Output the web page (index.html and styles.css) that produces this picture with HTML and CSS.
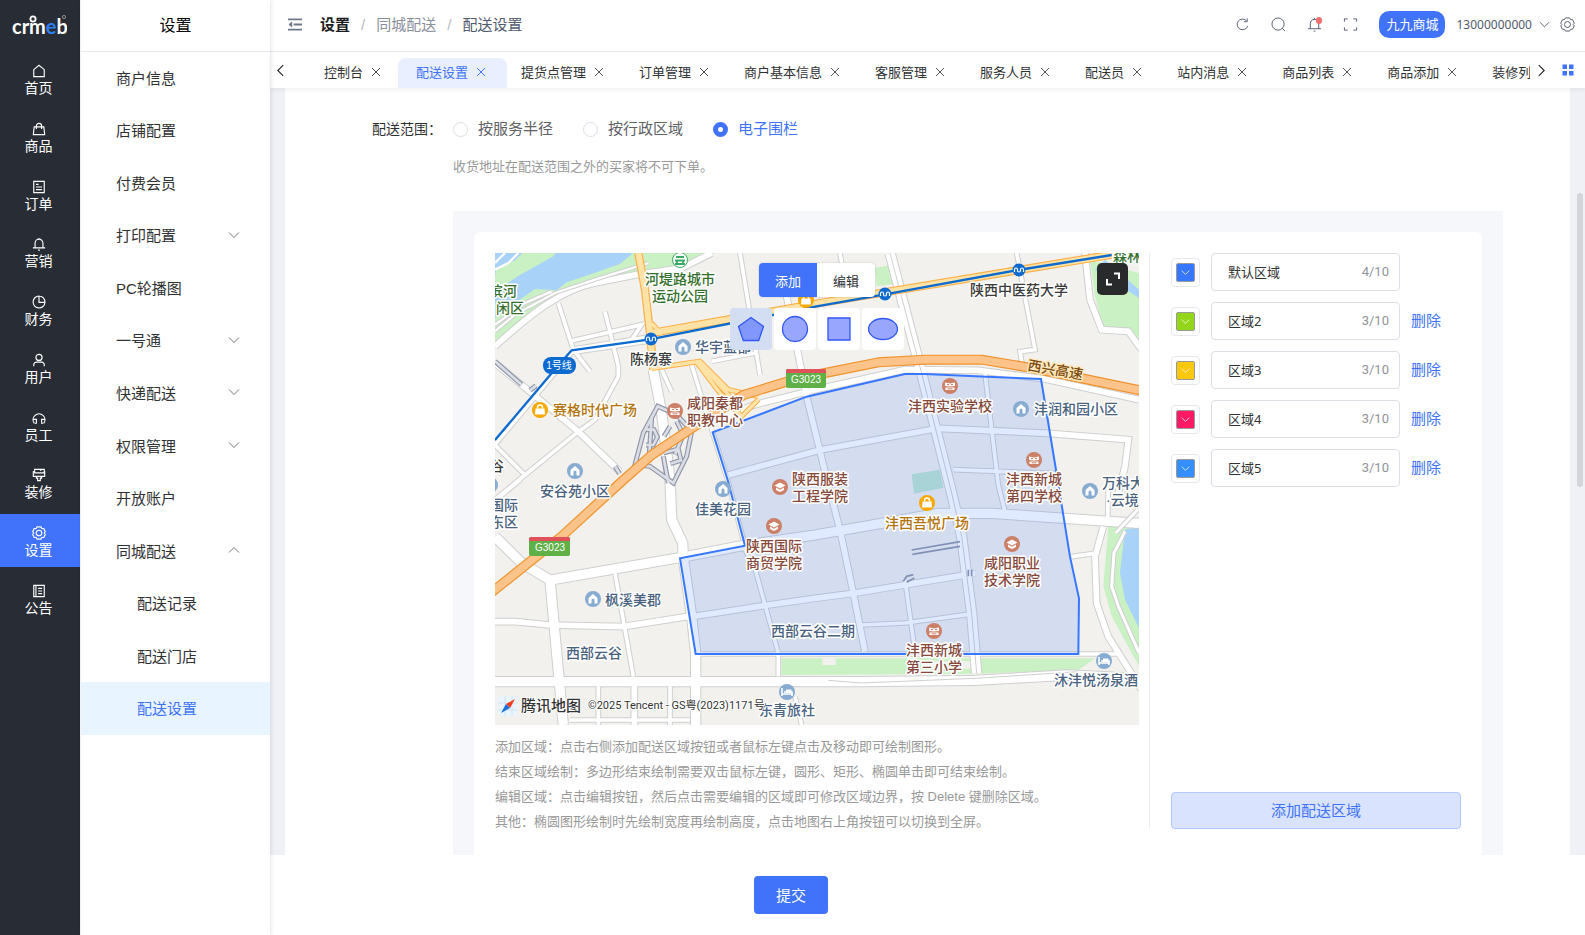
FILE: index.html
```html
<!DOCTYPE html>
<html lang="zh-CN">
<head>
<meta charset="utf-8">
<title>配送设置</title>
<link rel="stylesheet" href="styles.css">
</head>
<body>
<svg class="sprite" aria-hidden="true">
  <symbol id="down" viewBox="0 0 12 12"><path d="M1 3.500l5 5 5-5"/></symbol>
  <symbol id="up" viewBox="0 0 12 12"><path d="M1 8.500l5-5 5 5"/></symbol>
  <symbol id="x" viewBox="0 0 10 10"><path d="M1 1l8 8M9 1L1 9"/></symbol>
  <symbol id="gear" viewBox="0 0 16 16"><path d="M5.800 1h4.400l1 1.800 2.300.2 1.700 3.600-1.200 1.400 1.200 1.400-1.700 3.600-2.300.2-1 1.800H5.800l-1-1.800-2.300-.2L.8 9.400 2 8 .8 6.600 2.500 3l2.300-.2z"/><circle cx="8" cy="8" r="3.200"/></symbol>
  <symbol id="home-poi" viewBox="-8 -8 16 16"><circle r="8" fill="#88abd1"/><path d="M0-5L-4.500-1V4.500H-1.500V1a1.500 1.500 0 0 1 3 0V4.500H4.500V-1z" fill="#fff"/></symbol>
  <symbol id="book-poi" viewBox="-8 -8 16 16"><circle r="8" fill="#cc8068"/><path d="M-5-3.500L0-2.500l5-1V0L0 .5-5 0zM-4.500 1.500h9V4h-9z" fill="#fff"/><path d="M-3-1.500h2m2 0h2M-2.500 2.800h5" stroke="#cc8068" fill="none"/></symbol>
  <symbol id="cap-poi" viewBox="-8 -8 16 16"><circle r="8" fill="#cc8068"/><path d="M0-4.500L-5.500-1.500 0 1.500l5.500-3zM-4 .5V3l4 2 4-2V.5L0 2.800z" fill="#fff"/></symbol>
  <symbol id="bag-poi" viewBox="-8 -8 16 16"><circle r="8" fill="#f9a800"/><path d="M-4.500-1.500h9l.5 6H-5z" fill="#fff"/><path d="M-2.500-1.500v-1a2.500 2.500 0 0 1 5 0v1" fill="none" stroke="#fff" stroke-width="1.500"/></symbol>
  <symbol id="bed-poi" viewBox="-8 -8 16 16"><circle r="8" fill="#88abd1"/><path d="M-5-4v8M-5 2H5V4M-3 0h8v2" fill="none" stroke="#fff" stroke-width="1.600"/><path d="M-1-2.500h5.500V1H-1z" fill="#fff"/></symbol>
  <symbol id="metro" viewBox="-7 -7 14 14"><circle r="6.500" fill="#0d6bd0"/><path d="M-4.500 2v-2.500a1.500 1.500 0 0 1 3 0v1a1.500 1.500 0 0 0 3 0v-1a1.500 1.500 0 0 1 3 0V2" fill="none" stroke="#fff" stroke-width="1.200"/></symbol>
  <defs>
    <path id="roads-s" d="M190 151L235 290 285 355M330 176L370 340V370L300 500 250 536 90 666 0 740M0 576L90 666M75 681L10 735M225 265L440 215 410 260M225 290L460 252M500 350L530 416M590 336L650 530 698 681 745 860M735 0L795 366M1035 0L1045 60M1565 0L1620 290 1575 296 1585 356M1470 361L1510 696 1530 776M1375 650L1690 662M360 961L415 1271M745 880L780 946 850 1201M1100 1116L1230 1110 1420 1084M1230 981L1260 1196M1730 911L1800 901M1840 700L1838 800M310 1300V1416M525 1300V1416M225 1401H585M850 1201V1270M900 1330L920 1416M602 1203H1870M650 325L780 300M0 575L175 365 230 298 465 264"/>
    <path id="roads-m" d="M0 330L105 416 250 536 375 656M875 130L935 431 995 676 1035 831 1075 1021 1110 1196M1770 0L1785 140 1820 230 1900 235 1940 290M660 500L780 455 960 410 1230 350 1450 352 1650 378 1932 440M700 666L975 591 1330 526 1660 541 1900 560 1890 640 1870 720M0 1106H60L165 1116 385 1121 575 1091 605 1089 820 1056 960 1036 1075 1021 1440 961M1825 821L1800 911 1805 1051 1840 1151 1940 1310M418 1290V1416M0 280C110 180 200 110 300 90L425 65 560 45 650 0"/>
    <path id="roads-l" d="M475 350L500 480 525 681 530 800 563 870 565 916 590 1091 602 1201V1416M1185 0L1280 361 1370 720 1400 850 1430 1081 1445 1261M0 851L80 930 165 981 565 912 730 880 960 846 1330 781H1490L1710 796 1932 811M165 981L185 1200 205 1416M0 1286H1100L1440 1282 1720 1266 1932 1276"/>
    <path id="yellow-l" d="M430 0L450 110 465 240 475 350M470 240L975 150 1850 5"/>
    <path id="yellow-s" d="M470 346L615 325 700 410 790 430M605 328L690 440 740 490 790 440M615 330L650 370 740 470M470 210L500 245"/>
    <path id="motorway" d="M-10 1018L200 850 385 681 470 606 575 536 745 426 875 386 960 366 1150 328 1290 320H1460L1610 345 1940 413"/>
    <path id="ramps" d="M488 460L445 540 420 635 465 640 535 690 575 610 590 535 545 485zM470 490L462 620M455 530h22l10 22-12 24h-22M525 520l-18 30M545 505l20 40-25 60M505 600l45-12 8 34-32 10M520 690L505 610M0 325L80 395M105 412l18-14M360 640l14 22"/>
  </defs>
</svg>

<div class="app">
  <nav class="rail" aria-label="主菜单">
    <svg class="logo" viewBox="0 0 56 26" role="img" aria-label="crmeb">
      <text x="1" y="22" class="logo-text">crm<tspan class="logo-e">e</tspan>b</text>
      <circle cx="22" cy="7" r="2.600" fill="none" stroke="#fff" stroke-width="1.800"/>
      <circle cx="53" cy="5" r="1.600" fill="none" stroke="#ccc" stroke-width=".6"/>
    </svg>
    <div class="rail-list">
      <a href="#"><svg viewBox="0 0 16 16"><path d="M2 14.500V6.500L8 1.500l6 5v8z"/></svg>首页</a>
      <a href="#"><svg viewBox="0 0 16 16"><path d="M2.500 5.500h11l1 9h-13zM5 8V4.500a3 3 0 0 1 6 0V8"/></svg>商品</a>
      <a href="#"><svg viewBox="0 0 16 16"><path d="M2 1.500h12v13H2zM4.500 5h3M4.500 8h7M4.500 11h7"/></svg>订单</a>
      <a href="#"><svg viewBox="0 0 16 16"><path d="M3.500 12.500V7a4.500 4.500 0 0 1 9 0v5.500M1 12.500h14M8 1v1.500M7 15h2"/></svg>营销</a>
      <a href="#"><svg viewBox="0 0 16 16"><path d="M8 1.200A6.800 6.800 0 1 0 14.800 8.500H8zM8 1.200A6.800 6.800 0 0 1 14.800 8.500"/></svg>财务</a>
      <a href="#"><svg viewBox="0 0 16 16"><circle cx="8" cy="5" r="3.500"/><path d="M2 15v-1.500a3 3 0 0 1 3-3h6a3 3 0 0 1 3 3V15"/></svg>用户</a>
      <a href="#"><svg viewBox="0 0 16 16"><path d="M2.500 14A6.800 6.800 0 1 1 13.500 14M1.500 9.500h3.500V14H3M14.500 9.500H11V14h2"/></svg>员工</a>
      <a href="#"><svg viewBox="0 0 16 16"><path d="M3 1.500h11v4H3zM1.500 3.500v6h13v-6M5 9.500v2h1.500v3h3v-3H11v-2M10 1.500v2"/></svg>装修</a>
      <a href="#" class="on" aria-current="page"><svg viewBox="0 0 16 16"><use href="#gear"/></svg>设置</a>
      <a href="#"><svg viewBox="0 0 16 16"><path d="M2 1.500h12v13H2zM4.500 1.500v13M7 5h4.500M7 8h4.500M7 11h4.500"/></svg>公告</a>
    </div>
  </nav>

  <aside class="side">
    <h2>设置</h2>
    <div class="side-list">
      <a href="#">商户信息</a>
      <a href="#">店铺配置</a>
      <a href="#">付费会员</a>
      <a href="#">打印配置<svg><use href="#down"/></svg></a>
      <a href="#">PC轮播图</a>
      <a href="#">一号通<svg><use href="#down"/></svg></a>
      <a href="#">快递配送<svg><use href="#down"/></svg></a>
      <a href="#">权限管理<svg><use href="#down"/></svg></a>
      <a href="#">开放账户</a>
      <a href="#">同城配送<svg><use href="#up"/></svg></a>
      <a href="#" class="sub">配送记录</a>
      <a href="#" class="sub">配送门店</a>
      <a href="#" class="sub on" aria-current="page">配送设置</a>
    </div>
  </aside>

  <div class="main">
    <header class="top">
      <button class="icon-btn fold" aria-label="折叠菜单"><svg viewBox="0 0 16 14"><path d="M0 1.500h15M6 7h9M0 12.500h15" stroke-width="2"/><path d="M4 4.500L1 7l3 2.500z" fill="currentColor"/></svg></button>
      <nav class="crumbs" aria-label="面包屑"><b>设置</b><i>/</i><span class="mid">同城配送</span><i>/</i><span>配送设置</span></nav>
      <div class="tools">
        <button class="icon-btn" aria-label="刷新"><svg viewBox="0 0 16 16"><path d="M13.500 9.500A5.700 5.700 0 1 1 12 3.800M13 1.500v3.500H9.500"/></svg></button>
        <button class="icon-btn" aria-label="搜索"><svg viewBox="0 0 16 16"><circle cx="7.500" cy="7.500" r="6.500"/><path d="M12 12l3 3"/></svg></button>
        <button class="icon-btn bell" aria-label="消息"><svg viewBox="0 0 16 16"><path d="M3.500 12.500V7a4.500 4.500 0 0 1 9 0v5.500M1 12.500h14M8 1v1.500M7 15h2"/></svg></button>
        <button class="icon-btn" aria-label="全屏"><svg viewBox="0 0 16 16"><path d="M1.500 5V2H5M11 2h3.500v3M14.500 11v3H11M5 14H1.500v-3"/></svg></button>
      </div>
      <span class="shop">九九商城</span>
      <button class="user">13000000000<svg><use href="#down"/></svg></button>
      <button class="icon-btn" aria-label="系统设置"><svg viewBox="0 0 16 16"><use href="#gear"/></svg></button>
    </header>

    <div class="tabs">
      <button class="icon-btn prev" aria-label="向左"><svg viewBox="0 0 12 12"><path d="M8.500 1L3.500 6l5 5"/></svg></button>
      <div class="tab-list">
        <a href="#">控制台<svg><use href="#x"/></svg></a>
        <a href="#" class="on">配送设置<svg><use href="#x"/></svg></a>
        <a href="#">提货点管理<svg><use href="#x"/></svg></a>
        <a href="#">订单管理<svg><use href="#x"/></svg></a>
        <a href="#">商户基本信息<svg><use href="#x"/></svg></a>
        <a href="#">客服管理<svg><use href="#x"/></svg></a>
        <a href="#">服务人员<svg><use href="#x"/></svg></a>
        <a href="#">配送员<svg><use href="#x"/></svg></a>
        <a href="#">站内消息<svg><use href="#x"/></svg></a>
        <a href="#">商品列表<svg><use href="#x"/></svg></a>
        <a href="#">商品添加<svg><use href="#x"/></svg></a>
        <a href="#">装修列表<svg><use href="#x"/></svg></a>
      </div>
      <button class="icon-btn next" aria-label="向右"><svg viewBox="0 0 12 12"><path d="M3.500 1l5 5-5 5"/></svg></button>
      <button class="icon-btn grid" aria-label="标签页操作"><svg viewBox="0 0 12 12"><path d="M.5.500h4.500v4.500H.5zM7 .5h4.500v4.500H7zM.5 7h4.500v4.500H.5zM7 7h4.500v4.500H7z"/></svg></button>
    </div>

    <main class="content">
      <div class="card">
        <fieldset class="range">
          <legend>配送范围：</legend>
          <div class="options">
            <label><input type="radio" name="range">按服务半径</label>
            <label><input type="radio" name="range">按行政区域</label>
            <label><input type="radio" name="range" checked>电子围栏</label>
          </div>
        </fieldset>
        <p class="hint">收货地址在配送范围之外的买家将不可下单。</p>

        <section class="fence">
          <div class="fence-body">
            <div class="map-col">
              <div class="map">
                <svg class="map-art" viewBox="0 0 644 472" preserveAspectRatio="xMidYMid slice">
                  <g transform="scale(.33333)">
                    <path class="green" d="M0 0H660L550 45 415 60 300 88 185 140 85 200 0 285z"/>
                    <path class="water" d="M0 0H82L60 22 5 45 0 70zM175 10L182 0H415L375 32 305 58 215 88 185 112 120 108 60 150 0 195V115L75 66z"/>
                    <path class="green" d="M1785 20L1932 60V270L1900 225H1825L1800 130zM1140 45L1192 35 1205 92 1145 100z"/>
                    <path class="water" d="M1830 20L1932 110V135L1800 50z"/>
                    <path class="green" d="M1840 821L1932 800V1240L1850 1090 1825 1000zM860 1216H1800L1750 1252 1440 1262 860 1266z"/>
                    <path class="water" d="M1890 830L1932 820V1125L1890 1040 1875 960z"/>
                    <path fill="#f2f1ee" d="M982 1216h40v20h-40zM1280 1225h150v22h-150z"/>
                    <g class="case">
                      <use href="#roads-s" stroke-width="17"/><use href="#roads-m" stroke-width="23"/><use href="#roads-l" stroke-width="34"/>
                    </g>
                    <g class="fill">
                      <use href="#roads-s" stroke-width="11"/><use href="#roads-m" stroke-width="17"/><use href="#roads-l" stroke-width="28"/>
                    </g>
                    <g class="thin">
                      <path d="M0 235L60 185 180 120 300 80 460 30M0 215L90 150 170 115" stroke-width="13"/>
                      <path d="M0 235L60 185 180 120 300 80 460 30M0 215L90 150 170 115M0 50L40 30 70 0M0 30L30 0" stroke-width="7" stroke="#fff"/>
                      <path d="M1185 0L1280 361 1370 720 1400 850 1430 1081 1445 1261M1000 1282L1100 1290 1440 1276 1750 1256"/>
                      <path d="M1890 835L1857 900 1850 1000 1870 1060 1932 1200M1862 840L1928 770" stroke-width="15"/>
                      <path d="M1890 835L1857 900 1850 1000 1870 1060 1932 1200M1862 840L1928 770" stroke-width="9" stroke="#fff"/>
                    </g>
                    <g class="ramp">
                      <use href="#ramps" stroke-width="15"/>
                      <use href="#ramps" stroke-width="8" stroke="#dcdee6"/>
                      <path d="M1250 891L1395 866M1252 904L1395 880M1225 985L1235 970 1255 965M1235 988L1258 975M1420 950V970M1430 950V970"/>
                    </g>
                    <path fill="#bfe6d0" d="M1250 664L1335 650 1345 705 1257 722z"/>
                    <g class="yellow-case"><use href="#yellow-l" stroke-width="25"/><use href="#yellow-s" stroke-width="16"/></g>
                    <g class="yellow-fill"><use href="#yellow-l" stroke-width="18"/><use href="#yellow-s" stroke-width="10"/></g>
                    <use href="#motorway" class="motor-case"/>
                    <use href="#motorway" class="motor-fill"/>
                    <path class="metro-line" d="M0 561L175 355 230 292 465 259 960 161 1170 124 1570 51 1850 6"/>
                    <path class="fence-shape" d="M653 538L698 681 750 878 555 916 602 1203H1750L1752 1036 1725 911 1688 681 1638 378 1475 371 1290 363H1230L935 431z"/>
                  </g>
                  <g>
                    <use href="#metro" x="149" y="79" width="14" height="14"/><use href="#metro" x="383" y="34" width="14" height="14"/><use href="#metro" x="517" y="10" width="14" height="14"/>
                    <rect x="48" y="104" width="33" height="17" rx="8" fill="#0d6bd0"/><text class="line-name" x="64" y="116">1号线</text>
                    <rect x="291" y="116" width="40" height="19" rx="2" fill="#5fb047"/><path d="M291 120v-2q0-2 2-2h36q2 0 2 2v2z" fill="#e0525a"/><text class="road-no" x="311" y="130">G3023</text>
                    <rect x="34" y="284" width="41" height="19" rx="2" fill="#5fb047"/><path d="M34 288v-2q0-2 2-2h37q2 0 2 2v2z" fill="#e0525a"/><text class="road-no" x="55" y="298">G3023</text>
                    <circle cx="185" cy="7" r="7.500" fill="#fff" stroke="#3aa965"/><path d="M181 4h8M180 7.500h10M182 8v3M188 8v3M180 11h10" stroke="#3aa965" stroke-width="1.800"/>
                    <use href="#bag-poi" x="303" y="39" width="16" height="16"/><use href="#bag-poi" x="37" y="149" width="16" height="16"/><use href="#bag-poi" x="424" y="242" width="16" height="16"/>
                    <use href="#home-poi" x="180" y="86" width="16" height="16"/><use href="#home-poi" x="220" y="228" width="16" height="16"/><use href="#home-poi" x="72" y="210" width="16" height="16"/><use href="#home-poi" x="90" y="338" width="16" height="16"/><use href="#home-poi" x="518" y="148" width="16" height="16"/><use href="#home-poi" x="587" y="230" width="16" height="16"/><use href="#home-poi" x="-13" y="224" width="16" height="16"/>
                    <use href="#book-poi" x="172" y="150" width="16" height="16"/><use href="#book-poi" x="447" y="125" width="16" height="16"/><use href="#book-poi" x="531" y="199" width="16" height="16"/><use href="#book-poi" x="431" y="370" width="16" height="16"/>
                    <use href="#cap-poi" x="277" y="226" width="16" height="16"/><use href="#cap-poi" x="271" y="265" width="16" height="16"/><use href="#cap-poi" x="509" y="283" width="16" height="16"/>
                    <use href="#bed-poi" x="601" y="400" width="16" height="16"/><use href="#bed-poi" x="284" y="431" width="16" height="16"/>
                  </g>
                  <g class="poi mid-anchor">
                    <g class="park"><text x="185" y="31">河堤路城市</text><text x="185" y="48">运动公园</text></g>
                    <g class="dark"><text x="156" y="111">陈杨寨</text><text x="524" y="42">陕西中医药大学</text></g>
                    <g class="home"><text x="228" y="261">佳美花园</text><text x="80" y="243">安谷苑小区</text><text x="99" y="405">西部云谷</text><text x="318" y="383">西部云谷二期</text></g>
                    <g class="school"><text x="325" y="231">陕西服装</text><text x="325" y="248">工程学院</text><text x="279" y="298">陕西国际</text><text x="279" y="315">商贸学院</text><text x="455" y="158">沣西实验学校</text><text x="539" y="231">沣西新城</text><text x="539" y="248">第四学校</text><text x="517" y="315">咸阳职业</text><text x="517" y="332">技术学院</text><text x="439" y="402">沣西新城</text><text x="439" y="419">第三小学</text></g>
                    <g class="mall"><text x="432" y="275">沣西吾悦广场</text></g>
                  </g>
                  <g class="poi">
                    <g class="park"><text x="-6" y="43">滨河</text><text x="1" y="60">闲区</text><text x="618" y="8">森林</text></g>
                    <g class="mall"><text x="58" y="162">赛格时代广场</text></g>
                    <g class="school"><text x="192" y="155">咸阳秦都</text><text x="192" y="172">职教中心</text></g>
                    <g class="dark"><text x="-5" y="218">谷</text></g>
                    <g class="home"><text x="200" y="99">华宇蓝都</text><text x="-5" y="257">国际</text><text x="-5" y="274">东区</text><text x="110" y="352">枫溪美郡</text><text x="539" y="161">沣润和园小区</text><text x="607" y="235">万科大</text><text x="611" y="252" class="latin-dot">·云境</text><text x="559" y="432">沐沣悦汤泉酒</text><text x="264" y="462">东青旅社</text></g>
                    <text class="highway" x="532" y="117" transform="rotate(10 532 117)">西兴高速</text>
                  </g>
                  <rect x="3" y="443" width="20" height="20" rx="4" fill="#eaf4fb"/><path d="M3 450h20M10 443v20M17 443v20M3 457h20" stroke="#cfe6f5"/><path d="M20 446l-5 9-4-4z" fill="#f03c1e"/><path d="M6 460l5-9 4 4z" fill="#1671d9"/>
                  <text class="brand" x="26" y="458">腾讯地图</text>
                  <text class="rights" x="93" y="456">©2025 Tencent - GS粤(2023)1171号</text>
                </svg>
                <div class="map-tools">
                  <div class="modes"><button class="on">添加</button><button>编辑</button></div>
                  <div class="shapes">
                    <button class="on" aria-label="多边形"><svg viewBox="0 0 30 30"><path d="M15 3.500L27.500 12.500 22.700 26.500H7.300L2.500 12.500z"/></svg></button>
                    <button aria-label="圆形"><svg viewBox="0 0 30 30"><circle cx="15" cy="15" r="12.500"/></svg></button>
                    <button aria-label="矩形"><svg viewBox="0 0 30 30"><path d="M4 4h22v22H4z"/></svg></button>
                    <button aria-label="椭圆"><svg viewBox="0 0 30 30"><ellipse cx="15" cy="15" rx="14.500" ry="10.500"/></svg></button>
                  </div>
                </div>
                <button class="full" aria-label="全屏地图"><svg viewBox="0 0 14 14"><path d="M8 1.500h5V7M1 7v5.500h5"/></svg></button>
              </div>
              <div class="tips">
                <p>添加区域：点击右侧添加配送区域按钮或者鼠标左键点击及移动即可绘制图形。</p>
                <p>结束区域绘制：多边形结束绘制需要双击鼠标左键，圆形、矩形、椭圆单击即可结束绘制。</p>
                <p>编辑区域：点击编辑按钮，然后点击需要编辑的区域即可修改区域边界，按 Delete 键删除区域。</p>
                <p>其他：椭圆图形绘制时先绘制宽度再绘制高度，点击地图右上角按钮可以切换到全屏。</p>
              </div>
            </div>
            <div class="zones">
              <div class="zone"><button class="swatch blue" aria-label="选择颜色"><svg><use href="#down"/></svg></button><label class="field"><input type="text" aria-label="区域名称" value="默认区域" maxlength="10"><span>4/10</span></label></div>
              <div class="zone"><button class="swatch lime" aria-label="选择颜色"><svg><use href="#down"/></svg></button><label class="field"><input type="text" aria-label="区域名称" value="区域2" maxlength="10"><span>3/10</span></label><a href="#">删除</a></div>
              <div class="zone"><button class="swatch gold" aria-label="选择颜色"><svg><use href="#down"/></svg></button><label class="field"><input type="text" aria-label="区域名称" value="区域3" maxlength="10"><span>3/10</span></label><a href="#">删除</a></div>
              <div class="zone"><button class="swatch pink" aria-label="选择颜色"><svg><use href="#down"/></svg></button><label class="field"><input type="text" aria-label="区域名称" value="区域4" maxlength="10"><span>3/10</span></label><a href="#">删除</a></div>
              <div class="zone"><button class="swatch sky" aria-label="选择颜色"><svg><use href="#down"/></svg></button><label class="field"><input type="text" aria-label="区域名称" value="区域5" maxlength="10"><span>3/10</span></label><a href="#">删除</a></div>
              <button class="add-zone">添加配送区域</button>
            </div>
          </div>
        </section>
      </div>
      <span class="thumb"></span>
    </main>

    <footer class="foot"><button class="submit">提交</button></footer>
  </div>
</div>
</body>
</html>
```
FILE: styles.css
```css
* { box-sizing: border-box; }
body {
  margin: 0;
  font-family: "Liberation Sans", "Noto Sans CJK SC", sans-serif;
  font-size: 15px;
  color: #303133;
  background: #fff;
}
a { color: inherit; text-decoration: none; }
button {
  margin: 0; padding: 0; border: 0; background: none;
  font: inherit; color: inherit; cursor: pointer;
}
p { margin: 0; }
svg { fill: none; stroke: currentColor; flex: none; }
.sprite { position: absolute; width: 0; height: 0; }
.sprite defs path { fill: none; stroke: inherit; }

.app { display: flex; height: 100vh; overflow: hidden; }

/* dark rail */
.rail { width: 80px; flex: none; background: #282c34; color: #fff; }
.logo { display: block; width: 56px; height: 26px; margin: 12px 0 0 11px; stroke: none; }
.logo-text { font: 700 20px Lato, sans-serif; fill: #fff; }
.logo-e { fill: #2d7ff9; }
.rail-list {
  display: flex; flex-direction: column; justify-content: space-between;
  min-height: 573px; margin-top: 14px;
}
.rail-list a {
  display: flex; flex-direction: column; align-items: center;
  height: 53px; padding: 12px 3px 0 0;
  font-size: 14px; line-height: 20px;
}
.rail-list svg { width: 14px; height: 14px; stroke-width: 1.3; }
.rail-list .on { background: #4073fa; }

/* second menu */
.side {
  width: 190px; flex: none; border-left: 1px solid #f0f2f5;
  box-shadow: 1px 0 4px rgba(0, 21, 41, .12); z-index: 1;
}
.side h2 {
  height: 52px; margin: 0; border-bottom: 1px solid #e6e8ee;
  font-size: 16px; font-weight: 400; line-height: 52px; text-align: center; color: #000;
}
.side-list { display: grid; grid-auto-rows: 1fr; min-height: 683px; }
.side-list a {
  display: flex; align-items: center; justify-content: space-between;
  padding: 0 30px 2px 35px;
}
.side-list svg { width: 12px; height: 12px; color: #777; }
.side-list .sub { padding-left: 56px; }
.side-list .on { background: #e8f4ff; color: #4073fa; }

.main { flex: 1; min-width: 0; display: flex; flex-direction: column; }

/* header */
.top {
  display: flex; align-items: center; height: 52px; flex: none;
  padding: 0 10px 2px 18px; border-bottom: 1px solid #e6e8ee;
}
.icon-btn { display: flex; align-items: center; justify-content: center; color: #515a6e; }
.icon-btn svg { width: 15px; height: 15px; }
.fold { color: #6f7888; margin-right: 17px; }
.crumbs { display: flex; align-items: center; gap: 11px; color: #515a6e; line-height: 20px; }
.crumbs b { color: #1c1d20; }
.crumbs i { color: #b4bac6; font-style: normal; }
.crumbs .mid { color: #8a909c; }
.tools { display: flex; gap: 21px; margin-left: auto; }
.bell { position: relative; }
.bell::after {
  content: ""; position: absolute; top: 0; right: 0;
  width: 6px; height: 7px; border-radius: 50%; background: #f56c6c;
}
.shop {
  margin: 0 11px 0 21px; padding: 0 7px; border-radius: 10px;
  background: #4073fa; color: #fff; font-size: 13px; line-height: 27px;
}
.user {
  display: flex; align-items: center; gap: 7px; margin-right: 10px;
  font: 12px "Noto Sans", sans-serif; color: #515a6e;
}
.user svg { width: 11px; height: 11px; }

/* tabs */
.tabs {
  display: flex; align-items: center; height: 36px; flex: none;
  padding-right: 11px; box-shadow: 0 2px 4px rgba(0, 21, 41, .06); z-index: 1;
}
.prev { width: 20px; color: #222; }
.prev svg, .next svg { width: 13px; height: 13px; }
.next { width: 22px; color: #222; }
.grid { width: 12px; margin-left: 10px; }
.grid svg { width: 12px; height: 12px; fill: #4073fa; stroke: none; }
.tab-list { flex: 1; min-width: 0; display: flex; align-self: stretch; padding-left: 16px; overflow: hidden; }
.tab-list a {
  position: relative; display: flex; align-items: center; gap: 8px; flex: none;
  padding: 3px 17px 0 18px; font-size: 13px;
}
.tab-list svg { width: 10px; height: 10px; color: #555; }
.tab-list .on { color: #4073fa; isolation: isolate; }
.tab-list .on svg { color: #4073fa; }
.tab-list .on::before {
  content: ""; position: absolute; inset: 6px -4px 0 0; z-index: -1;
  border-radius: 8px 8px 0 0; background: #e9effe;
}

/* content */
.content {
  position: relative; flex: 1; min-height: 0; overflow: hidden;
  padding: 0 15px; background: #f0f1f6;
}
.thumb {
  position: absolute; top: 105px; right: 2px;
  width: 6px; height: 294px; border-radius: 3px; background: #d4d5da;
}
.card { min-height: 100%; padding: 29px 67px 0 87px; background: #fff; }
.range { display: flex; margin: 0; padding: 0; border: 0; }
.range legend { float: left; width: 81px; padding: 0; font-size: 14px; line-height: 24px; }
.options { display: flex; gap: 30px; color: #606266; line-height: 24px; }
.options label { display: flex; align-items: center; gap: 10px; }
.options label:has(:checked) { color: #4073fa; }
.options input {
  appearance: none; width: 15px; height: 15px; margin: 0;
  border: 1px solid #dcdfe6; border-radius: 50%; background: #fff;
}
.options input:checked { border: 5px solid #4073fa; }
.hint { margin: 16px 0 34px 81px; font-size: 13px; line-height: 20px; color: #999; }

.fence { margin-left: 81px; padding: 21px; background: #f5f7fb; }
.fence-body { display: flex; min-height: 640px; padding: 21px; border-radius: 6px; background: #fff; }
.map-col { flex: 1; min-width: 0; }
.map { position: relative; height: 472px; overflow: hidden; background: #f2f1ee; }
.map-art { display: block; width: 100%; height: 100%; stroke: none; }
.green { fill: #c9f1c3; }
.water { fill: #a8d2f8; }
.case { stroke: #cfcfcf; }
.fill { stroke: #fff; }
.thin { stroke: #cfcfcf; stroke-width: 3; }
.ramp { stroke: #8f96a8; stroke-width: 5; }
.yellow-case { stroke: #fcb04a; }
.yellow-fill { stroke: #ffe3a6; }
.motor-case { stroke: #f0922b; stroke-width: 30; stroke-linejoin: round; }
.motor-fill { stroke: #fcc48b; stroke-width: 23; stroke-linejoin: round; }
.metro-line { stroke: #0d6bd0; stroke-width: 7; }
.fence-shape { fill: rgba(55, 119, 255, .16); stroke: #3777ff; stroke-width: 6; }
.poi text {
  font-family: "Noto Sans CJK SC", sans-serif; font-size: 14px; font-weight: 500;
  stroke: #fff; stroke-width: 3px; stroke-linejoin: round; paint-order: stroke;
}
.poi .latin-dot { font-family: "Liberation Sans", "Noto Sans CJK SC", sans-serif; }
.mid-anchor text { text-anchor: middle; }
.park { fill: #34702b; }
.dark { fill: #3a3a3a; }
.home { fill: #48627e; }
.school { fill: #86483a; }
.mall { fill: #b3740c; }
.poi .highway { fill: #7a4a10; stroke: #ffe9bd; }
.line-name, .road-no { fill: #fff; font-size: 10px; text-anchor: middle; }
.brand { fill: #333; font: 500 15px "Noto Sans CJK SC", sans-serif; stroke: #fff; stroke-width: 2px; paint-order: stroke; }
.rights { fill: #333; font: 11px Roboto, "Noto Sans CJK SC", sans-serif; stroke: #fff; stroke-width: 2px; paint-order: stroke; }

.map-tools {
  position: absolute; inset: 10px 0 auto;
  display: flex; flex-direction: column; align-items: center; gap: 11px;
  pointer-events: none;
}
.modes, .shapes { display: flex; pointer-events: auto; }
.modes { border-radius: 4px; overflow: hidden; background: #fff; box-shadow: 0 0 2px rgba(0, 0, 0, .2); }
.modes button { width: 58px; height: 34px; font-size: 13px; }
.modes .on { background: #4073fa; color: #fff; }
.shapes { gap: 2px; }
.shapes button {
  display: flex; align-items: center; justify-content: center;
  width: 42px; height: 42px; border-radius: 4px; background: #fff;
}
.shapes .on { background: #d3def2; }
.shapes svg { width: 30px; height: 30px; fill: #98a6fd; stroke: #3257f5; stroke-width: 1.3; }
.shapes .on svg { fill: #8197fc; }
.full {
  position: absolute; top: 10px; right: 11px; display: flex; align-items: center; justify-content: center;
  width: 31px; height: 32px; border-radius: 5px; background: #292a2b; color: #fff;
}
.full svg { width: 14px; height: 14px; stroke-width: 2; }
.tips { padding-top: 9px; font-size: 13px; line-height: 25px; color: #999; }

.zones {
  display: flex; flex-direction: column; gap: 11px;
  width: 312px; min-height: 576px; align-self: flex-start; flex: none;
  margin-left: 10px; padding-left: 21px; border-left: 1px solid #ebedf3;
}
.zone { display: flex; align-items: center; gap: 11px; height: 38px; }
.swatch {
  display: flex; width: 29px; height: 29px; padding: 4px; flex: none;
  border: 1px solid #e6e8ee; border-radius: 4px; background: #fff;
}
.swatch svg { flex: 1; height: 19px; padding: 4px; border: 1px solid #999; border-radius: 2px; color: #fff; }
.blue svg { background: #3777ff; }
.lime svg { background: #93d61a; }
.gold svg { background: #fac80f; }
.pink svg { background: #ff1a66; }
.sky svg { background: #368fff; }
.field {
  display: flex; align-items: center; width: 189px; height: 38px; flex: none;
  padding: 0 10px 2px 16px; border: 1px solid #dcdfe6; border-radius: 4px;
}
.field input {
  flex: 1; min-width: 0; padding: 0; border: 0; outline: 0; background: none;
  font: 13px "Noto Sans", "Noto Sans CJK SC", sans-serif; color: #303133;
}
.field span { font-size: 13px; font-family: Roboto, sans-serif; color: #909399; }
.zone a { color: #4073fa; line-height: 20px; }
.add-zone {
  height: 37px; margin-top: auto; padding-bottom: 2px; border: 1px solid #b3c7fd; border-radius: 4px;
  background: #d9e3fe; color: #4073fa;
}

/* footer */
.foot { display: flex; justify-content: center; flex: none; height: 80px; padding: 21px 273px 0 0; }
.submit { width: 74px; height: 38px; padding-bottom: 2px; border-radius: 4px; background: #4073fa; color: #fff; }
```
